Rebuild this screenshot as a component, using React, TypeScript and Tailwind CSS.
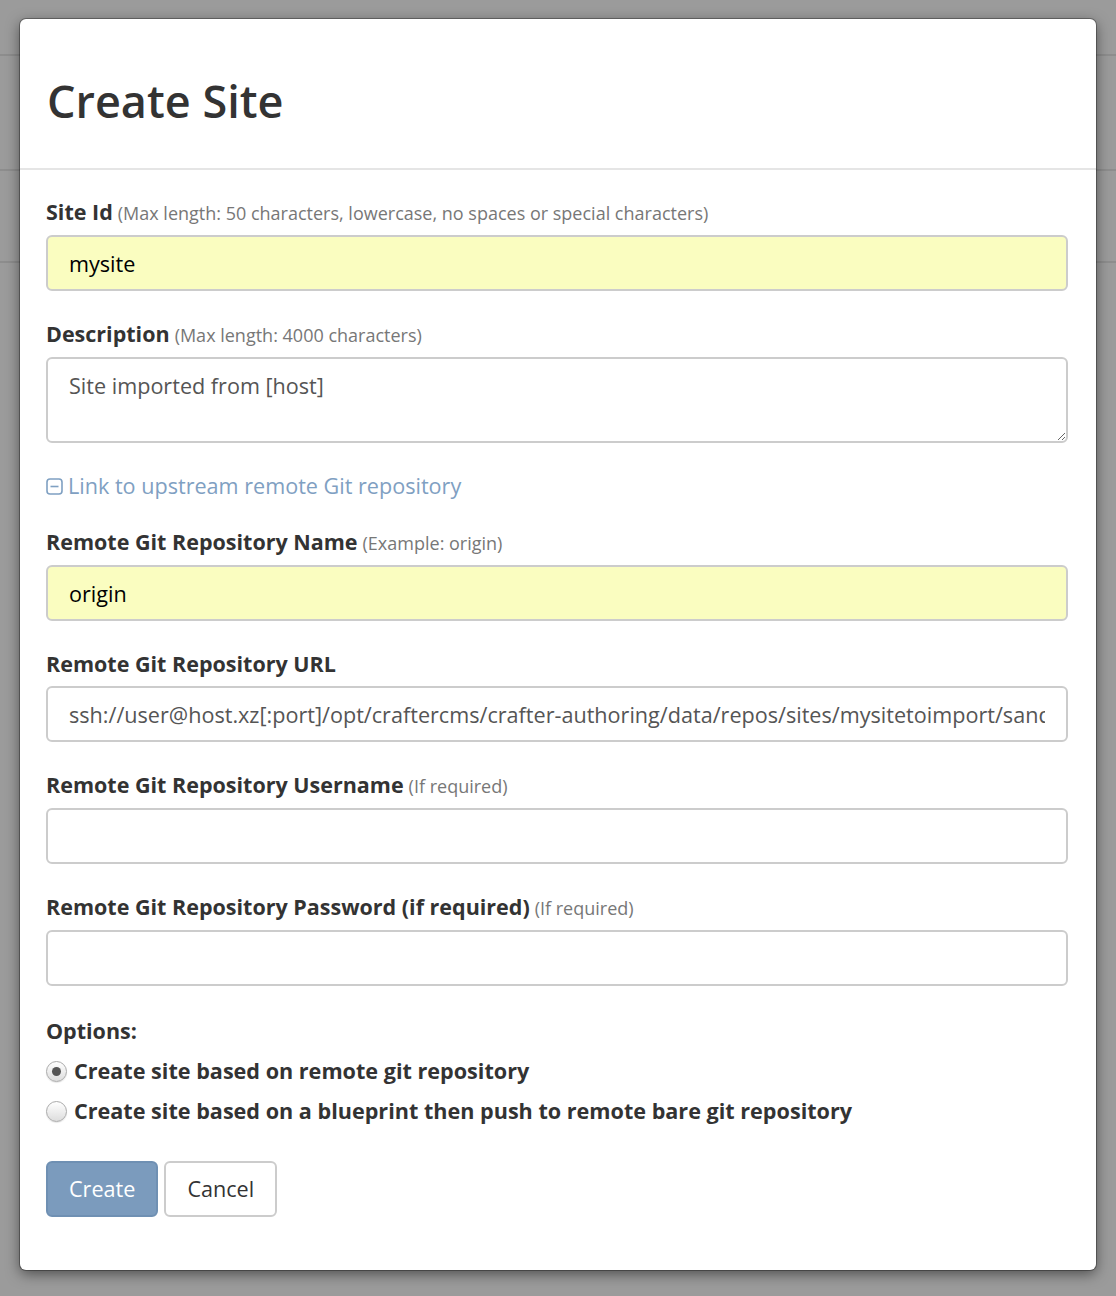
import React from 'react';

function Label({ title, hint }: { title: string; hint?: string }) {
  return (
    <label className="block mb-[7px] leading-[30px] text-[21.5px] font-bold text-[#333]">
      {title}
      {hint && <span className="ml-[5px] text-[18px] font-normal text-[#777]">{hint}</span>}
    </label>
  );
}

function Field({ title, hint, value, yellow, last }: { title: string; hint?: string; value?: string; yellow?: boolean; last?: boolean }) {
  return (
    <div className={last ? 'mb-[30px]' : 'mb-7'}>
      <Label title={title} hint={hint} />
      <input
        readOnly
        value={value ?? ''}
        className={`block w-full h-[56px] px-[21px] rounded-[6px] border-2 border-[#ccc] text-[21.6px] outline-none ${
          yellow ? 'bg-[#fafdc0] text-black' : 'bg-white text-[#555]'
        }`}
      />
    </div>
  );
}

function Radio({ checked, children }: { checked?: boolean; children: React.ReactNode }) {
  return (
    <div className="flex items-center h-[40px]">
      <span className="w-[21px] h-[21px] rounded-full border border-[#aaa] bg-gradient-to-b from-[#fff] to-[#ddd] flex items-center justify-center mr-[7px] shadow-[0_1px_1px_rgba(0,0,0,0.1)]">
        {checked && <span className="w-[9px] h-[9px] rounded-full bg-[#555]" />}
      </span>
      <span className="text-[21.6px] font-bold text-[#333]">{children}</span>
    </div>
  );
}

export default function App() {
  return (
    <div
      className="w-[1116px] h-[1296px] bg-[#9b9b9b] bg-[linear-gradient(to_bottom,transparent_54px,#8d8d8d_54px,#8d8d8d_56px,transparent_56px,transparent_169px,#8d8d8d_169px,#8d8d8d_171px,transparent_171px,transparent_261px,#8d8d8d_261px,#8d8d8d_263px,transparent_263px)] pt-[19px] px-[20px] overflow-hidden"
      style={{ fontFamily: '"Open Sans", "Liberation Sans", sans-serif' }}
    >
      <div className="bg-white rounded-[6px] h-[1251px] shadow-[0_0_0_1px_rgba(0,0,0,0.3),0_4px_14px_rgba(0,0,0,0.5)] overflow-hidden">
        <div className="h-[151px] border-b-2 border-[#e5e5e5] pl-[27px] pt-[59px]">
          <h3 className="text-[45px] leading-[1] font-semibold text-[#333]">Create Site</h3>
        </div>
        <div className="pl-[26px] pr-[28px] pt-[27px]">
          <Field
            title="Site Id"
            hint="(Max length: 50 characters, lowercase, no spaces or special characters)"
            value="mysite"
            yellow
          />
          <div className="mb-7">
            <Label title="Description" hint="(Max length: 4000 characters)" />
            <textarea
              readOnly
              value="Site imported from [host]"
              className="block w-full h-[86px] px-[21px] py-[11px] rounded-[6px] border-2 border-[#ccc] text-[21.6px] text-[#555] outline-none resize-y"
            />
          </div>
          <div className="mb-[26px] flex items-center h-[30px] text-[21.6px] text-[#7fa0c2]">
            <svg width="17" height="17" viewBox="0 0 17 17" className="mr-[5px]">
              <rect x="1" y="1" width="15" height="15" rx="3" fill="none" stroke="#7fa0c2" strokeWidth="1.6" />
              <line x1="4.5" y1="8.5" x2="12.5" y2="8.5" stroke="#7fa0c2" strokeWidth="1.6" />
            </svg>
            Link to upstream remote Git repository
          </div>
          <Field title="Remote Git Repository Name" hint="(Example: origin)" value="origin" yellow />
          <Field
            title="Remote Git Repository URL"
            value="ssh://user@host.xz[:port]/opt/craftercms/crafter-authoring/data/repos/sites/mysitetoimport/sandbox"
          />
          <Field title="Remote Git Repository Username" hint="(If required)" />
          <Field title="Remote Git Repository Password (if required)" hint="(If required)" last />
          <div className="text-[21.5px] font-bold text-[#333] leading-[30px] mb-[5px]">Options:</div>
          <Radio checked>Create site based on remote git repository</Radio>
          <Radio>Create site based on a blueprint then push to remote bare git repository</Radio>
          <div className="flex gap-[6px] mt-[30px]">
            <button className="h-[56px] px-[21px] rounded-[6px] bg-[#7b9bbd] border-2 border-[#6f90b3] text-white text-[21.6px]">
              Create
            </button>
            <button className="h-[56px] px-[21px] rounded-[6px] bg-white border-2 border-[#ccc] text-[#333] text-[21.6px]">
              Cancel
            </button>
          </div>
        </div>
      </div>
    </div>
  );
}
